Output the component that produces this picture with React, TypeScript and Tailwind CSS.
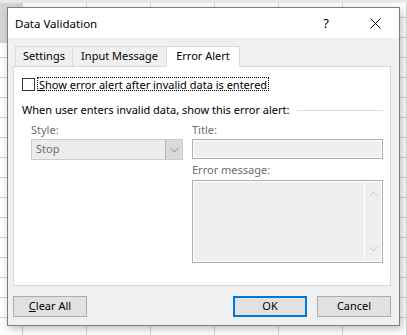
// Data Validation dialog — "Error Alert" tab, shown over a spreadsheet grid

const font = "font-['Segoe_UI','Noto_Sans',sans-serif]";

function Tab({ label, active, width }: { label: string; active?: boolean; width: string }) {
  return (
    <div
      className={`${width} h-[21px] flex items-center justify-center border border-[#d9d9d9] -mr-px ${
        active ? "bg-white border-b-white relative z-10" : "bg-[#f0f0f0]"
      }`}
    >
      {label}
    </div>
  );
}

function Button({ children, primary, width }: { children: React.ReactNode; primary?: boolean; width: string }) {
  return (
    <div
      className={`${width} h-[21px] flex items-center justify-center bg-[#e1e1e1] ${
        primary ? "border-2 border-[#0078d7]" : "border border-[#adadad]"
      }`}
    >
      {children}
    </div>
  );
}

function Chevron({ up, color = "#8a8a8a" }: { up?: boolean; color?: string }) {
  return (
    <svg width="9" height="6" viewBox="0 0 9 6" fill="none" stroke={color} strokeWidth="1">
      {up ? <polyline points="0.5,5 4.5,1 8.5,5" /> : <polyline points="0.5,1 4.5,5 8.5,1" />}
    </svg>
  );
}

export default function App() {
  return (
    <div className={`relative w-[407px] h-[335px] overflow-hidden bg-white ${font} text-[11px] text-black`}>
      {/* spreadsheet grid behind the dialog */}
      <div className="absolute inset-0 bg-[linear-gradient(to_right,#d4d4d4_1px,transparent_1px),linear-gradient(to_bottom,#d4d4d4_1px,transparent_1px)] bg-[size:64px_20px] bg-[position:22px_17px]" />
      <div className="absolute left-0 top-[3px] w-[22px] h-[40px] bg-[#d6d6d6]" />
      <div className="absolute left-0 top-0 w-full h-[3px] bg-[#e9e9e9]" />

      {/* dialog */}
      <div className="absolute left-[7px] top-[7px] w-[393px] h-[319px] flex flex-col border border-[#7d7d7d] bg-[#f0f0f0] shadow-[2px_3px_8px_rgba(0,0,0,0.25)]">
        {/* title bar */}
        <div className="h-[30px] shrink-0 flex items-center bg-white pl-[7px] pt-[1px]">
          <span className="flex-1 text-[11.5px]">Data Validation</span>
          <span className="w-[12px] text-center mr-[35px] text-[13px]">?</span>
          <div className="w-[16px] flex justify-center mr-[16px]">
            <svg width="11" height="11" viewBox="0 0 11 11" stroke="#000" strokeWidth="1">
              <line x1="0.5" y1="0.5" x2="10.5" y2="10.5" />
              <line x1="10.5" y1="0.5" x2="0.5" y2="10.5" />
            </svg>
          </div>
        </div>

        <div className="flex-1 flex flex-col pl-[5px] pr-[8px] pt-[8px] pb-[8px]">
          {/* tabs */}
          <div className="flex pl-[2px] -mb-px">
            <Tab label="Settings" width="w-[58px]" />
            <Tab label="Input Message" width="w-[95px]" />
            <Tab label="Error Alert" width="w-[74px]" active />
          </div>

          {/* tab panel */}
          <div className="flex-1 flex flex-col bg-white border border-[#d9d9d9] pl-[8px] pr-[7px] pt-[10px]">
            <div className="flex items-center h-[14px]">
              <div className="w-[13px] h-[13px] border border-[#333] bg-white shrink-0" />
              <div className="ml-[2px] h-[14px] px-[1px] flex items-center border border-dotted border-black leading-none">
                <span>
                  <span className="underline">S</span>how error alert after invalid data is entered
                </span>
              </div>
            </div>

            <div className="mt-[11px] h-[16px] flex items-center">
              <span className="whitespace-nowrap">When user enters invalid data, show this error alert:</span>
              <div className="flex-1 ml-[7px] h-px bg-[#dcdcdc]" />
            </div>

            <div className="flex pl-[9px]">
              {/* style column */}
              <div className="w-[152px] flex flex-col">
                <div className="mt-[4px] h-[16px] leading-[16px] text-[#6d6d6d]">Style:</div>
                <div className="mt-[1px] h-[21px] flex border border-[#cccccc] bg-[#ececec]">
                  <div className="flex-1 flex items-center pl-[4px] text-[#6d6d6d]">Stop</div>
                  <div className="w-[17px] flex items-center justify-center bg-[#dadada] border-l border-[#b4b4b4]">
                    <Chevron />
                  </div>
                </div>
              </div>

              {/* title + message column */}
              <div className="ml-[9px] flex-1 flex flex-col">
                <div className="mt-[4px] h-[16px] leading-[16px] text-[#6d6d6d]">Title:</div>
                <div className="mt-[1px] h-[20px] border border-[#adadad] bg-white p-px">
                  <div className="w-full h-full bg-[#efefef]" />
                </div>
                <div className="mt-[3px] h-[16px] leading-[16px] text-[#6d6d6d]">Error message:</div>
                <div className="mt-[2px] h-[83px] flex border border-[#adadad] bg-white p-px">
                  <div className="flex-1 bg-[#efefef]" />
                  <div className="w-[17px] flex flex-col items-center justify-between py-[9px] bg-[#efefef] border-l border-white">
                    <Chevron up color="#c4c4c4" />
                    <Chevron color="#c4c4c4" />
                  </div>
                </div>
              </div>
            </div>
          </div>

          {/* buttons */}
          <div className="mt-[10px] flex items-center">
            <Button width="w-[74px]">
              <span>
                <span className="underline">C</span>lear All
              </span>
            </Button>
            <div className="flex-1" />
            <Button width="w-[74px]" primary>
              OK
            </Button>
            <div className="w-[10px]" />
            <Button width="w-[74px]">Cancel</Button>
          </div>
        </div>
      </div>
    </div>
  );
}
